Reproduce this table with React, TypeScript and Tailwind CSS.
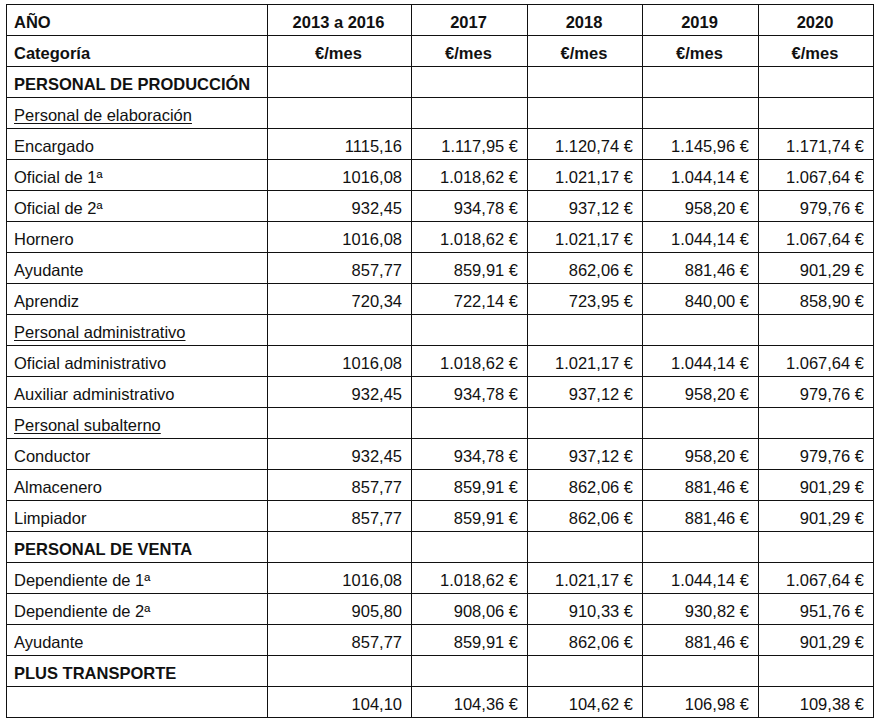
const years = ["2013 a 2016", "2017", "2018", "2019", "2020"];

type Row =
  | { kind: "section"; label: string }
  | { kind: "group"; label: string }
  | { kind: "data"; label: string; values: string[] };

const rows: Row[] = [
  { kind: "section", label: "PERSONAL DE PRODUCCIÓN" },
  { kind: "group", label: "Personal de elaboración" },
  { kind: "data", label: "Encargado", values: ["1115,16", "1.117,95 €", "1.120,74 €", "1.145,96 €", "1.171,74 €"] },
  { kind: "data", label: "Oficial de 1ª", values: ["1016,08", "1.018,62 €", "1.021,17 €", "1.044,14 €", "1.067,64 €"] },
  { kind: "data", label: "Oficial de 2ª", values: ["932,45", "934,78 €", "937,12 €", "958,20 €", "979,76 €"] },
  { kind: "data", label: "Hornero", values: ["1016,08", "1.018,62 €", "1.021,17 €", "1.044,14 €", "1.067,64 €"] },
  { kind: "data", label: "Ayudante", values: ["857,77", "859,91 €", "862,06 €", "881,46 €", "901,29 €"] },
  { kind: "data", label: "Aprendiz", values: ["720,34", "722,14 €", "723,95 €", "840,00 €", "858,90 €"] },
  { kind: "group", label: "Personal administrativo" },
  { kind: "data", label: "Oficial administrativo", values: ["1016,08", "1.018,62 €", "1.021,17 €", "1.044,14 €", "1.067,64 €"] },
  { kind: "data", label: "Auxiliar administrativo", values: ["932,45", "934,78 €", "937,12 €", "958,20 €", "979,76 €"] },
  { kind: "group", label: "Personal subalterno" },
  { kind: "data", label: "Conductor", values: ["932,45", "934,78 €", "937,12 €", "958,20 €", "979,76 €"] },
  { kind: "data", label: "Almacenero", values: ["857,77", "859,91 €", "862,06 €", "881,46 €", "901,29 €"] },
  { kind: "data", label: "Limpiador", values: ["857,77", "859,91 €", "862,06 €", "881,46 €", "901,29 €"] },
  { kind: "section", label: "PERSONAL DE VENTA" },
  { kind: "data", label: "Dependiente de 1ª", values: ["1016,08", "1.018,62 €", "1.021,17 €", "1.044,14 €", "1.067,64 €"] },
  { kind: "data", label: "Dependiente de 2ª", values: ["905,80", "908,06 €", "910,33 €", "930,82 €", "951,76 €"] },
  { kind: "data", label: "Ayudante", values: ["857,77", "859,91 €", "862,06 €", "881,46 €", "901,29 €"] },
  { kind: "section", label: "PLUS TRANSPORTE" },
  { kind: "data", label: "", values: ["104,10", "104,36 €", "104,62 €", "106,98 €", "109,38 €"] },
];

const cell = "border border-[#111] h-[31px] p-0 pt-[4px] pl-[7px] pr-[9px] align-middle";

export default function App() {
  return (
    <div className="bg-white min-h-[724px] pt-[4px] pl-[6px] text-[#111] font-['Liberation_Sans',Arial,sans-serif] text-[16.5px] leading-none">
      <table className="border-collapse table-fixed w-[867px]">
        <colgroup>
          <col className="w-[261px]" />
          <col className="w-[144px]" />
          <col className="w-[116px]" />
          <col className="w-[115px]" />
          <col className="w-[116px]" />
          <col className="w-[115px]" />
        </colgroup>
        <tbody>
          <tr>
            <td className={`${cell} font-bold`}>AÑO</td>
            {years.map((y) => (
              <td key={y} className={`${cell} font-bold text-center`}>{y}</td>
            ))}
          </tr>
          <tr>
            <td className={`${cell} font-bold`}>Categoría</td>
            {years.map((y) => (
              <td key={y} className={`${cell} font-bold text-center`}>€/mes</td>
            ))}
          </tr>
          {rows.map((row, i) => (
            <tr key={i}>
              {row.kind === "data" ? (
                <>
                  <td className={cell}>{row.label}</td>
                  {row.values.map((v, j) => (
                    <td key={j} className={`${cell} text-right`}>{v}</td>
                  ))}
                </>
              ) : (
                <>
                  <td className={`${cell} ${row.kind === "section" ? "font-bold" : "underline underline-offset-2"}`}>
                    {row.label}
                  </td>
                  {years.map((y) => (
                    <td key={y} className={cell}></td>
                  ))}
                </>
              )}
            </tr>
          ))}
        </tbody>
      </table>
    </div>
  );
}
